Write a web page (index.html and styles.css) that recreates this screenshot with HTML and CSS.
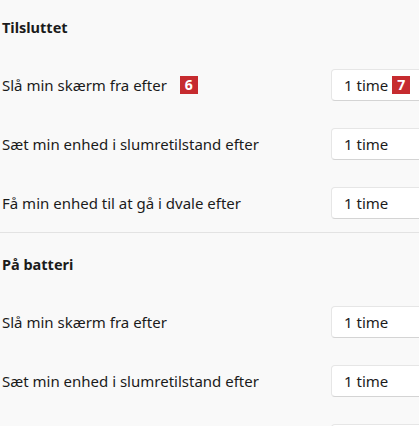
FILE: index.html
```html
<!DOCTYPE html>
<html lang="da">
<head>
<meta charset="utf-8">
<link rel="stylesheet" href="styles.css">
</head>
<body>
<div class="page">
  <section class="group">
    <h2 class="heading first">Tilsluttet</h2>
    <div class="row">
      <span class="label">Slå min skærm fra efter <span class="badge badge-label">6</span></span>
      <div class="select">1 time <span class="badge badge-select">7</span></div>
    </div>
    <div class="row">
      <span class="label">Sæt min enhed i slumretilstand efter</span>
      <div class="select">1 time</div>
    </div>
    <div class="row">
      <span class="label">Få min enhed til at gå i dvale efter</span>
      <div class="select">1 time</div>
    </div>
  </section>
  <hr class="sep">
  <section class="group">
    <h2 class="heading second">På batteri</h2>
    <div class="row">
      <span class="label">Slå min skærm fra efter</span>
      <div class="select">1 time</div>
    </div>
    <div class="row">
      <span class="label">Sæt min enhed i slumretilstand efter</span>
      <div class="select">1 time</div>
    </div>
    <div class="row">
      <span class="label">Få min enhed til at gå i dvale efter</span>
      <div class="select">1 time</div>
    </div>
  </section>
</div>
</body>
</html>
```
FILE: styles.css
```css
html, body {
  margin: 0;
  padding: 0;
  background: #f9f9f9;
  overflow: hidden;
}
body {
  font-family: "Noto Sans", "Open Sans", sans-serif;
  font-size: 15px;
  color: #1b1b1b;
}
.page {
  width: 449px;
  padding-left: 2px;
}
.heading {
  margin: 0;
  font-size: 14.5px;
  font-weight: 700;
  line-height: 20px;
}
.heading.first {
  margin-top: 17px;
  margin-bottom: 18px;
}
.heading.second {
  margin-top: 21px;
  margin-bottom: 18px;
}
.row {
  height: 59px;
  display: flex;
  align-items: center;
  justify-content: space-between;
}
.label {
  display: flex;
  align-items: center;
}
.select {
  box-sizing: border-box;
  width: 120px;
  height: 32px;
  padding-left: 12px;
  display: flex;
  align-items: center;
  background: #ffffff;
  border: 1px solid #e6e6e6;
  border-bottom-color: #d4d4d4;
  border-radius: 4px;
}
.badge {
  display: inline-flex;
  align-items: center;
  justify-content: center;
  width: 18px;
  height: 18px;
  background: #c62b2f;
  color: #fff;
  font-weight: 700;
  font-size: 14px;
  line-height: 1;
}
.badge-label {
  margin-left: 13px;
}
.badge-select {
  margin-left: 4px;
}
.sep {
  margin: 0 0 0 -2px;
  border: 0;
  height: 1px;
  background: #e3e3e3;
}
```
